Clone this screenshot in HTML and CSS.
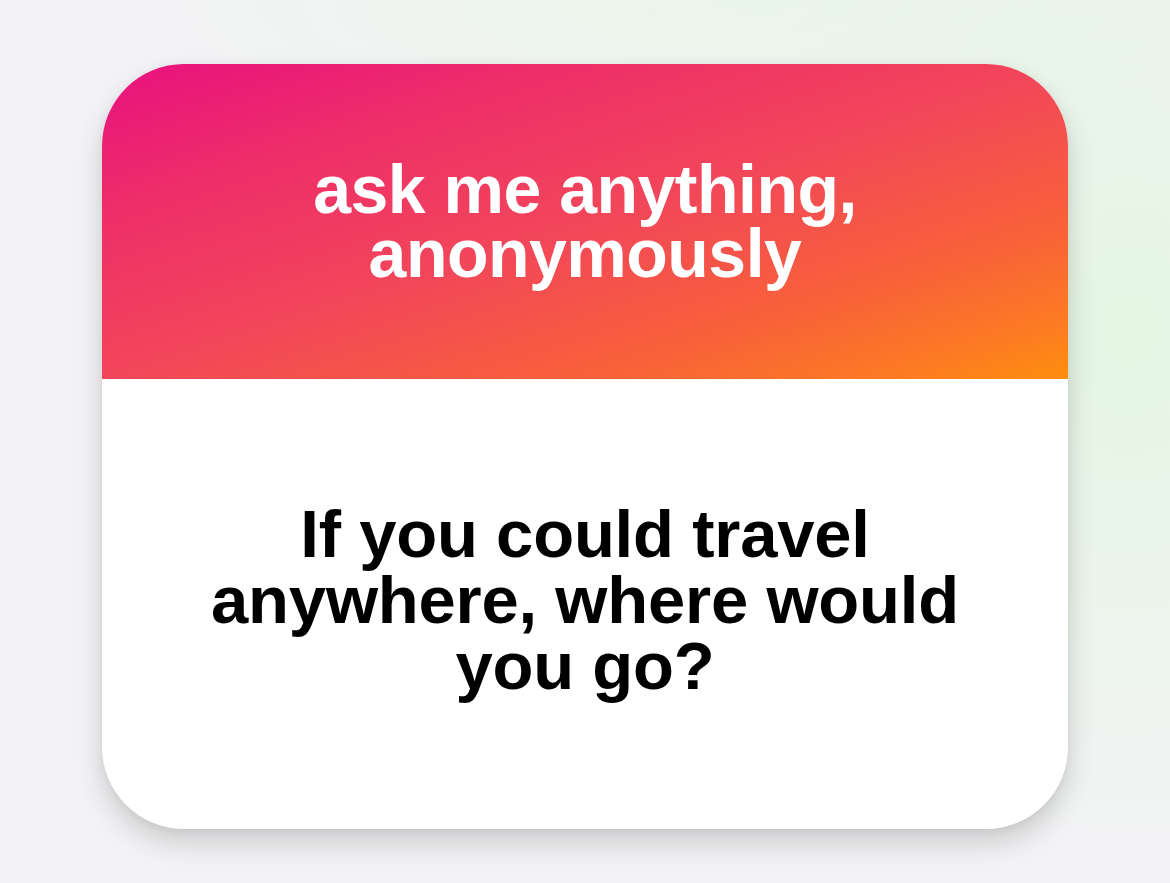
FILE: index.html
```html
<!DOCTYPE html>
<html lang="en">
<head>
<meta charset="utf-8">
<title>Ask me anything</title>
<link rel="stylesheet" href="styles.css">
</head>
<body>
<main class="page">
  <section class="card">
    <header class="card-head">
      <h1 class="head-title"><span class="line">ask me anything,</span><span class="line">anonymously</span></h1>
    </header>
    <div class="card-body">
      <p class="question"><span class="line">If you could travel</span><span class="line">anywhere, where would</span><span class="line">you go?</span></p>
    </div>
  </section>
</main>
</body>
</html>
```

FILE: styles.css
```css
html, body {
  margin: 0;
  padding: 0;
}
body {
  width: 1170px;
  height: 883px;
  overflow: hidden;
  font-family: "Liberation Sans", Arial, sans-serif;
  background:
    radial-gradient(ellipse 420px 520px at 1130px 330px, rgba(226, 246, 224, 0.9), rgba(226, 246, 224, 0) 100%),
    radial-gradient(ellipse 600px 160px at 760px 0px, rgba(232, 246, 230, 0.8), rgba(232, 246, 230, 0) 100%),
    #f3f3f5;
}
.page {
  display: flex;
  padding: 64px 0 0 102px;
}
.card {
  width: 966px;
  height: 765px;
  border-radius: 82px;
  overflow: hidden;
  background: #ffffff;
  display: flex;
  flex-direction: column;
  box-shadow: 0 14px 28px rgba(0, 0, 0, 0.16), 0 2px 8px rgba(0, 0, 0, 0.05);
}
.card-head {
  height: 315px;
  flex: none;
  display: flex;
  align-items: center;
  justify-content: center;
  background: linear-gradient(to bottom right, #e8117f 0%, #ee2f68 25%, #f2465a 50%, #f86139 75%, #fc7a24 90%, #ff8e0d 100%);
}
.line {
  display: block;
}
.head-title {
  margin: 0;
  color: #ffffff;
  font-size: 68px;
  line-height: 64px;
  font-weight: 700;
  letter-spacing: -0.5px;
  text-align: center;
  padding-bottom: 1px;
}
.card-body {
  flex: 1;
  display: flex;
  align-items: center;
  justify-content: center;
  padding-bottom: 8px;
}
.question {
  margin: 0;
  color: #000000;
  font-size: 67px;
  line-height: 66px;
  font-weight: 700;
  letter-spacing: -0.2px;
  text-align: center;
}
```
